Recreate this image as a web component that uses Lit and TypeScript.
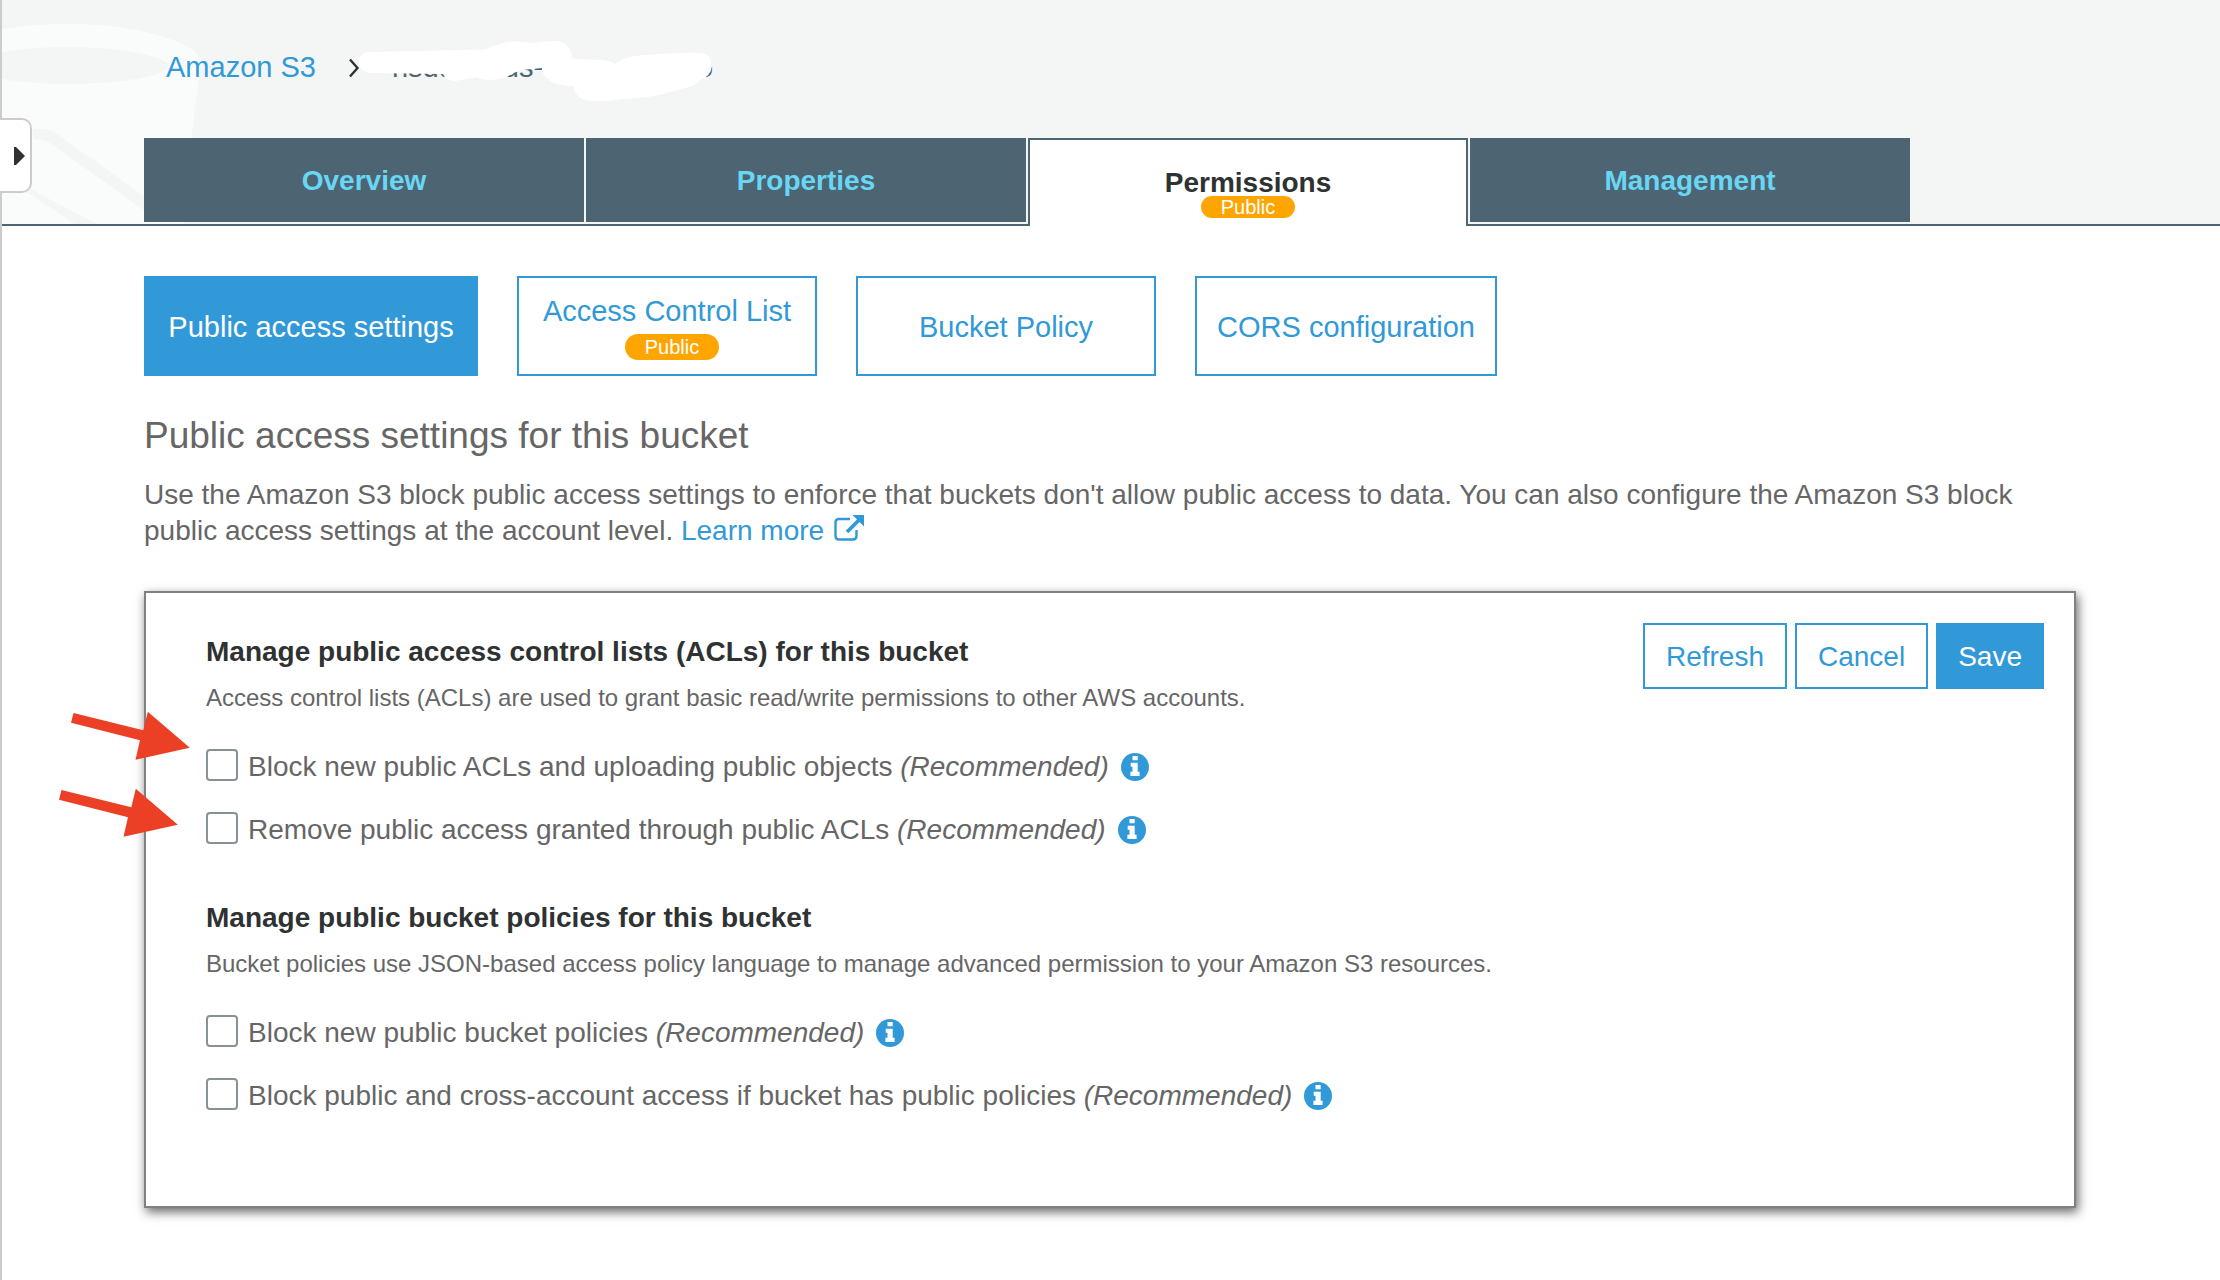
import { LitElement, html, css, svg, nothing } from "lit";
import { customElement, property } from "lit/decorators.js";

const infoIcon = html`<svg width="28" height="28" viewBox="0 0 28 28" aria-hidden="true">
  <circle cx="14" cy="14" r="14" fill="#3199d7" />
  <path d="M11.5 3h5.2v4.2h-5.2zM9.7 9.8h7v8.9h1.9v4.3H9.4v-4.3h2.1v-4.9H9.7z" fill="#fff" />
</svg>`;

const arrowShape = svg`<path d="M2.5 2 72.3 19.3 76.8 .7 118.8 36.7 64.5 48.7 69 29.3 0 11.7z" fill="#ec4026" />`;

interface Setting {
  id: string;
  label: string;
}

interface Group {
  title: string;
  text: string;
  settings: Setting[];
}

const groups: Group[] = [
  {
    title: "Manage public access control lists (ACLs) for this bucket",
    text: "Access control lists (ACLs) are used to grant basic read/write permissions to other AWS accounts.",
    settings: [
      { id: "block-acls", label: "Block new public ACLs and uploading public objects" },
      { id: "remove-acls", label: "Remove public access granted through public ACLs" },
    ],
  },
  {
    title: "Manage public bucket policies for this bucket",
    text: "Bucket policies use JSON-based access policy language to manage advanced permission to your Amazon S3 resources.",
    settings: [
      { id: "block-policies", label: "Block new public bucket policies" },
      { id: "block-cross", label: "Block public and cross-account access if bucket has public policies" },
    ],
  },
];

@customElement("setting-row")
class SettingRow extends LitElement {
  @property() name = "";
  @property() label = "";

  static styles = css`
    :host {
      display: flex;
      align-items: flex-start;
      color: #666;
      font-size: 28px;
      line-height: 36px;
    }
    .box {
      appearance: none;
      box-sizing: border-box;
      flex: none;
      width: 32px;
      height: 32px;
      margin: 0 10px 0 0;
      border: 2px solid #879196;
      border-radius: 4px;
      background: #fff;
    }
    .info {
      flex: none;
      display: block;
      margin: 4px 0 0 12px;
      padding: 0;
      border: 0;
      background: none;
      line-height: 0;
    }
  `;

  render() {
    return html`
      <input class="box" type="checkbox" id=${this.name} />
      <label for=${this.name}>${this.label} <em>(Recommended)</em></label>
      <button class="info" type="button" aria-label="More information">${infoIcon}</button>
    `;
  }
}

@customElement("app-root")
class AppRoot extends LitElement {
  static styles = css`
    :host {
      display: block;
      box-sizing: border-box;
      min-height: 100vh;
      border-left: 2px solid #ccc;
      background: #fff;
      color: #666;
      font-family: "Liberation Sans", Arial, sans-serif;
      font-size: 28px;
      line-height: 36px;
    }
    h1,
    h2,
    p {
      margin: 0;
    }
    a {
      color: #3199d7;
      text-decoration: none;
    }
    button {
      font-family: inherit;
    }
    .header {
      position: relative;
      padding: 51px 144px 0 142px;
      background: #f4f6f5;
      border-bottom: 2px solid #4d6472;
    }
    .watermark {
      position: absolute;
      left: 0;
      top: 0;
    }
    .drawer {
      position: absolute;
      box-sizing: border-box;
      left: -2px;
      top: 118px;
      width: 32px;
      height: 75px;
      padding: 0 5px 0 0;
      display: flex;
      align-items: center;
      justify-content: flex-end;
      border: 2px solid #ccc;
      border-left: 0;
      border-radius: 0 10px 10px 0;
      background: #fff;
    }
    .crumbs {
      position: relative;
      display: flex;
      align-items: center;
      padding-left: 22px;
      font-size: 29px;
      line-height: 32px;
    }
    .crumb-sep {
      margin: 2px 32px 0;
    }
    .bucket {
      display: flex;
      color: #4d6472;
    }
    .bucket-mid {
      margin-left: 48px;
    }
    .bucket-end {
      margin-left: 154px;
    }
    .mask {
      position: absolute;
      left: 213px;
      top: -11px;
    }
    .tabs {
      position: relative;
      display: flex;
      align-items: flex-start;
      gap: 2px;
      margin: 55px 0 -2px;
    }
    .tab {
      box-sizing: border-box;
      flex: 0 1 440px;
      height: 84px;
      margin: 0 0 4px;
      padding: 2px 0 0;
      display: flex;
      flex-direction: column;
      align-items: center;
      justify-content: center;
      border: 0;
      background: #4d6472;
      color: #69d6f4;
      font-size: 28px;
      line-height: 32px;
      font-weight: bold;
    }
    .tab.active {
      height: 88px;
      margin: 0;
      padding-top: 27px;
      justify-content: flex-start;
      border: 2px solid #4d6472;
      border-bottom: 0;
      background: #fff;
      color: #2f3232;
    }
    .badge {
      padding: 0 20px;
      border-radius: 13px;
      background: #ffa500;
      color: #fff;
      font-size: 20px;
      font-weight: normal;
      line-height: 26px;
    }
    .tab .badge {
      margin-top: -3px;
      line-height: 22px;
    }
    .section .badge {
      margin-left: 10px;
    }
    .main {
      padding: 50px 144px 40px 142px;
    }
    .sections {
      display: grid;
      grid-template-columns: 334px 300px 300px 302px;
      gap: 39px;
    }
    .section {
      box-sizing: border-box;
      height: 100px;
      padding: 2px 0 0;
      display: flex;
      flex-direction: column;
      align-items: center;
      justify-content: center;
      gap: 7px;
      border: 2px solid #3199d7;
      background: #fff;
      color: #3199d7;
      font-size: 29px;
      line-height: 32px;
    }
    .section.active,
    .action.primary {
      background: #3199d7;
      color: #fff;
    }
    .title {
      margin-top: 38px;
      font-size: 37px;
      line-height: 44px;
      font-weight: normal;
    }
    .intro {
      margin-top: 19px;
    }
    .external {
      margin-left: 2px;
      vertical-align: -1px;
    }
    .panel {
      position: relative;
      display: flex;
      align-items: flex-start;
      justify-content: space-between;
      margin-top: 42px;
      padding: 30px 30px 92px 60px;
      border: 2px solid #808080;
      box-shadow: 2px 4px 10px rgba(0, 0, 0, 0.6);
    }
    .groups {
      padding-top: 11px;
      display: grid;
      gap: 52px;
    }
    .group-title {
      color: #2f3232;
      font-size: 28px;
      line-height: 36px;
      font-weight: bold;
    }
    .group-text {
      margin-top: 12px;
      font-size: 24px;
      line-height: 32px;
    }
    .rows {
      display: grid;
      gap: 27px;
      margin-top: 35px;
    }
    .actions {
      display: flex;
      gap: 8px;
    }
    .action {
      box-sizing: border-box;
      height: 66px;
      padding: 2px 21px 0;
      border: 2px solid #3199d7;
      background: #fff;
      color: #3199d7;
      font-size: 28px;
      line-height: 32px;
    }
    .action.primary {
      padding: 2px 20px 0;
    }
    .pointer {
      position: absolute;
      left: -75px;
      top: 118px;
    }
    .pointer.second {
      left: -87px;
      top: 195px;
    }
  `;

  private tab(name: string, active = false) {
    return html`<button class="tab ${active ? "active" : ""}" type="button" role="tab" aria-selected=${active}>
      <span>${name}</span>${active ? html`<span class="badge">Public</span>` : nothing}
    </button>`;
  }

  private section(name: string, active = false, badge = false) {
    return html`<button class="section ${active ? "active" : ""}" type="button">
      <span>${name}</span>${badge ? html`<span class="badge">Public</span>` : nothing}
    </button>`;
  }

  private group(g: Group) {
    return html`<section>
      <h2 class="group-title">${g.title}</h2>
      <p class="group-text">${g.text}</p>
      <div class="rows">
        ${g.settings.map((s) => html`<setting-row .name=${s.id} .label=${s.label}></setting-row>`)}
      </div>
    </section>`;
  }

  render() {
    return html`
      <header class="header">
        <svg class="watermark" width="210" height="224" viewBox="2 0 210 224" aria-hidden="true">
          <path d="M2 29Q35 24 70 24C120 24 165 34 190 48Q202 56 200 68L185 190V224H2z" fill="#fafcfb" />
          <path d="M2 52Q30 47 68 47C125 47 168 57 168 66S125 84 68 84Q30 84 2 79z" fill="#f4f6f5" />
          <path d="M33 129H43Q50 129 57 134L144 196V210L50 143Q46 140 33 139z" fill="#f4f6f5" />
          <path d="M19 187 30 189 97 224H75z" fill="#f4f6f5" />
        </svg>
        <nav class="crumbs" aria-label="Breadcrumb">
          <a href="#">Amazon S3</a>
          <svg class="crumb-sep" width="12" height="20" viewBox="0 0 12 20" aria-hidden="true">
            <path d="M2 1.5 9.5 10 2 18.5" fill="none" stroke="#2f3232" stroke-width="2.4" />
          </svg>
          <span class="bucket"><span>nsdu</span><span class="bucket-mid">us-</span><span class="bucket-end">o</span></span>
          <svg class="mask" width="356" height="64" viewBox="357 40 356 64" aria-hidden="true">
            <path
              d="M359 62Q359 52 371 52L485 49.5Q493 46 503 43T533 43Q545 41 555 41 566 41 570 50L573 59 603 60Q611 61 616 64 621 58 635 56 660 53 698 53 707 53 710 58L712 66Q711 76 700 80 697 85 685 88L655 96 605 101Q573 103 574 86 556 86 549 80 542 75 542 68L522 70Q514 72 507 77 485 83 477 77 465 79 455 81 446 81 443 74L372 73Q359 72 359 62z"
              fill="#fff"
            />
          </svg>
        </nav>
        <div class="tabs" role="tablist">
          ${this.tab("Overview")} ${this.tab("Properties")} ${this.tab("Permissions", true)}
          ${this.tab("Management")}
        </div>
        <button class="drawer" type="button" aria-label="Open navigation">
          <svg width="11" height="18" viewBox="0 0 11 18" aria-hidden="true">
            <path d="M0 0h2l9 9-9 9H0z" fill="#2f3232" />
          </svg>
        </button>
      </header>
      <main class="main">
        <div class="sections">
          ${this.section("Public access settings", true)} ${this.section("Access Control List", false, true)}
          ${this.section("Bucket Policy")} ${this.section("CORS configuration")}
        </div>
        <h1 class="title">Public access settings for this bucket</h1>
        <p class="intro">
          Use the Amazon S3 block public access settings to enforce that buckets don't allow public access to data. You
          can also configure the Amazon S3 block public access settings at the account level.
          <a href="#"
            >Learn more
            <svg class="external" width="30" height="26" viewBox="0 0 30 26" aria-hidden="true">
              <path
                d="M16 4H5Q1.5 4 1.5 7.5V21Q1.5 24.5 5 24.5H19Q22.5 24.5 22.5 21V15"
                fill="none"
                stroke="#3199d7"
                stroke-width="2.4"
              />
              <path d="M13 17 25 5" stroke="#3199d7" stroke-width="3.8" />
              <path d="M18.5 0H30V11.5z" fill="#3199d7" />
            </svg></a
          >
        </p>
        <div class="panel">
          <div class="groups">${groups.map((g) => this.group(g))}</div>
          <div class="actions">
            <button class="action" type="button">Refresh</button>
            <button class="action" type="button">Cancel</button>
            <button class="action primary" type="button">Save</button>
          </div>
          <svg class="pointer" width="120" height="50" viewBox="0 0 120 50" aria-hidden="true">${arrowShape}</svg>
          <svg class="pointer second" width="120" height="50" viewBox="0 0 120 50" aria-hidden="true">${arrowShape}</svg>
        </div>
      </main>
    `;
  }
}
